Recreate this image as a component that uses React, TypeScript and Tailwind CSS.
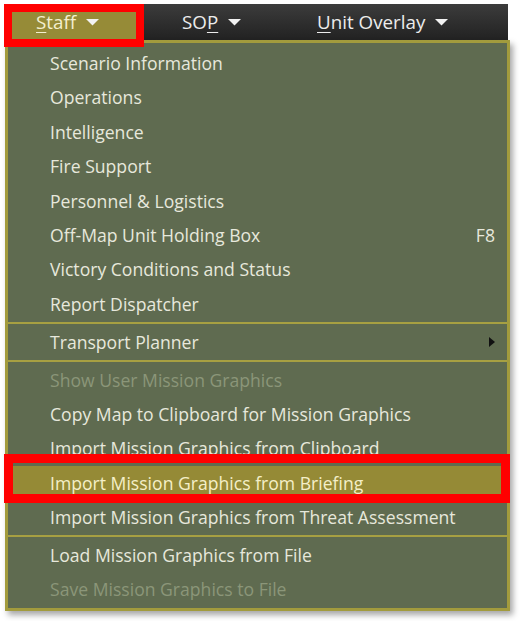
import React from "react";

type Row =
  | { sep: true }
  | { sep?: false; t: string; k?: string; sub?: boolean; dis?: boolean; hi?: boolean };

const rows: Row[] = [
  { t: "Scenario Information" },
  { t: "Operations" },
  { t: "Intelligence" },
  { t: "Fire Support" },
  { t: "Personnel & Logistics" },
  { t: "Off-Map Unit Holding Box", k: "F8" },
  { t: "Victory Conditions and Status" },
  { t: "Report Dispatcher" },
  { sep: true },
  { t: "Transport Planner", sub: true },
  { sep: true },
  { t: "Show User Mission Graphics", dis: true },
  { t: "Copy Map to Clipboard for Mission Graphics" },
  { t: "Import Mission Graphics from Clipboard" },
  { t: "Import Mission Graphics from Briefing", hi: true },
  { t: "Import Mission Graphics from Threat Assessment" },
  { sep: true },
  { t: "Load Mission Graphics from File" },
  { t: "Save Mission Graphics to File", dis: true },
];

function Caret() {
  return (
    <svg width="13" height="7" viewBox="0 0 13 7" className="ml-[10px] mt-[1px]">
      <polygon points="0,0 13,0 6.5,6.5" fill="#f2f2f2" />
    </svg>
  );
}

export default function App() {
  return (
    <div className="relative h-[621px] w-[523px] overflow-hidden bg-white font-['Open_Sans',sans-serif]">
      {/* menu bar */}
      <div className="pl-[4px] pt-[4px]">
        <div className="flex h-[36px] w-[504px] items-center bg-gradient-to-b from-[#3c3c3c] to-[#222222] text-[18.8px] text-[#ececec]">
          <div className="flex h-full w-[140px] items-center bg-[#968b37] pl-[32px] text-[#f3efcf]">
            <span>
              <span className="underline decoration-1 underline-offset-[3px]">S</span>taff
            </span>
            <Caret />
          </div>
          <div className="flex h-full w-[135px] items-center pl-[38px]">
            <span>
              SO<span className="underline decoration-1 underline-offset-[3px]">P</span>
            </span>
            <Caret />
          </div>
          <div className="flex h-full items-center pl-[38px]">
            <span>
              <span className="underline decoration-1 underline-offset-[3px]">U</span>nit Overlay
            </span>
            <Caret />
          </div>
        </div>
      </div>

      {/* dropdown panel */}
      <div className="ml-[5px] w-[505px] border-[3px] border-[#a29b3d] bg-[#5f6b50] pb-[1px] pt-[3px] shadow-[3px_4px_6px_rgba(0,0,0,0.35)]">
        {rows.map((r, i) =>
          r.sep ? (
            <div key={i} className="flex h-[3.5px] flex-col justify-center">
              <div className="h-[2px] w-full bg-[#a7a042]" />
            </div>
          ) : (
            <div
              key={i}
              className={
                "flex h-[34.4px] items-center pl-[42px] pr-[12px] text-[17.6px] " +
                (r.hi
                  ? "bg-[#958a36] text-[#f4efc8]"
                  : r.dis
                  ? "text-[#8b9679]"
                  : "text-[#e7e8dc]")
              }
            >
              <span className="flex-1 whitespace-nowrap">{r.t}</span>
              {r.k && <span className="text-[#e7e8dc]">{r.k}</span>}
              {r.sub && (
                <svg width="6" height="10" viewBox="0 0 6 10">
                  <polygon points="0,0 6,5 0,10" fill="#111" />
                </svg>
              )}
            </div>
          )
        )}
      </div>

      {/* red annotation boxes */}
      <div className="absolute left-[4px] top-[4px] h-[43px] w-[140px] border-[8px] border-[#ff0000]" />
      <div className="absolute left-[4px] top-[454px] h-[49px] w-[506px] border-[9px] border-[#ff0000]" />
    </div>
  );
}
